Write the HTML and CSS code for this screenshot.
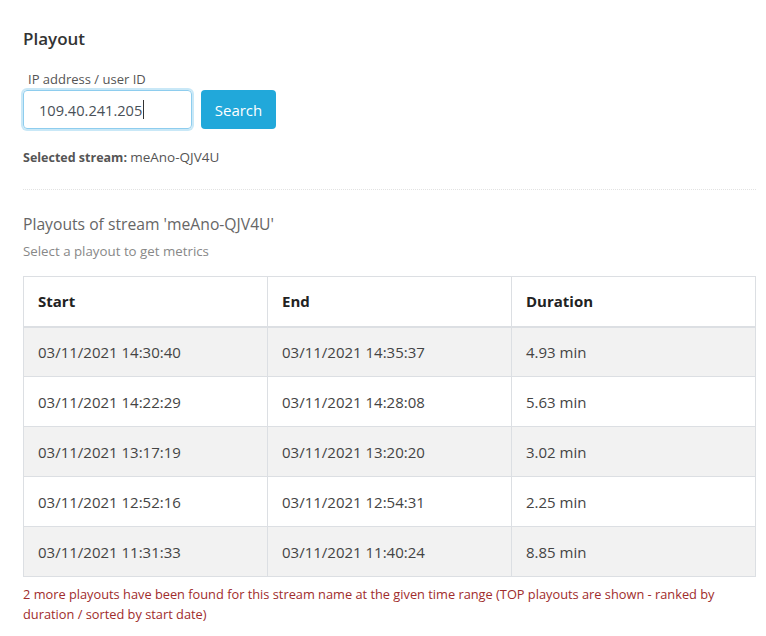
FILE: index.html
```html
<!DOCTYPE html>
<html>
<head>
<meta charset="utf-8">
<link rel="stylesheet" href="styles.css">
</head>
<body>
<div class="page">
  <h1 class="title">Playout</h1>
  <label class="field-label" for="ip">IP address / user ID</label>
  <div class="search-row">
    <div class="input"><span class="input-text">109.40.241.205</span><span class="caret"></span></div>
    <button class="btn">Search</button>
  </div>
  <p class="selected"><b>Selected stream:</b> <span class="selected-value">meAno-QJV4U</span></p>
  <hr class="rule">
  <h2 class="subtitle">Playouts of stream 'meAno-QJV4U'</h2>
  <p class="hint">Select a playout to get metrics</p>
  <table class="grid">
    <thead>
      <tr><th>Start</th><th>End</th><th>Duration</th></tr>
    </thead>
    <tbody>
      <tr><td>03/11/2021 14:30:40</td><td>03/11/2021 14:35:37</td><td>4.93 min</td></tr>
      <tr><td>03/11/2021 14:22:29</td><td>03/11/2021 14:28:08</td><td>5.63 min</td></tr>
      <tr><td>03/11/2021 13:17:19</td><td>03/11/2021 13:20:20</td><td>3.02 min</td></tr>
      <tr><td>03/11/2021 12:52:16</td><td>03/11/2021 12:54:31</td><td>2.25 min</td></tr>
      <tr><td>03/11/2021 11:31:33</td><td>03/11/2021 11:40:24</td><td>8.85 min</td></tr>
    </tbody>
  </table>
  <p class="note">2 more playouts have been found for this stream name at the given time range (TOP playouts are shown - ranked by duration / sorted by start date)</p>
</div>
</body>
</html>
```

FILE: styles.css
```css
* { box-sizing: border-box; }
body {
  margin: 0;
  background: #fff;
  font-family: "Open Sans", "Noto Sans", sans-serif;
  color: #333;
}
.page {
  width: 766px;
  padding: 29px 10px 0 23px;
}
.title {
  margin: 0;
  font-size: 17px;
  line-height: 20px;
  font-weight: 600;
  color: #333;
}
.field-label {
  display: block;
  margin: 21px 0 0 5px;
  font-size: 13px;
  line-height: 18px;
  color: #555;
}
.search-row {
  display: flex;
  gap: 9px;
  margin-top: 2px;
}
.input {
  width: 169px;
  height: 39px;
  border: 1px solid #8ecdee;
  border-radius: 4px;
  box-shadow: 0 0 0 2px #c9e8f7;
  display: flex;
  align-items: center;
  padding-left: 15px;
  font-size: 14.6px;
  color: #495057;
}
.caret {
  display: inline-block;
  width: 1px;
  height: 19px;
  background: #333;
  margin-left: 1px;
}
.btn {
  width: 75px;
  height: 39px;
  border: none;
  border-radius: 4px;
  background: #21a8da;
  color: #fff;
  font-family: inherit;
  font-size: 15px;
  padding: 0;
}
.selected {
  margin: 20px 0 0;
  height: 18px;
  font-size: 12.5px;
  line-height: 18px;
  color: #555;
}
.selected b { font-weight: 700; }
.selected-value { font-size: 13.5px; line-height: 1; }
.rule {
  margin: 22px 0 0;
  border: 0;
  border-top: 1px dotted #e2e2e2;
  height: 0;
}
.subtitle {
  margin: 23px 0 0;
  font-size: 15.7px;
  line-height: 22px;
  font-weight: 400;
  color: #666;
}
.hint {
  margin: 7px 0 0;
  font-size: 13.3px;
  line-height: 18px;
  color: #888;
}
.grid {
  margin-top: 16px;
  width: 733px;
  border-collapse: collapse;
  table-layout: fixed;
  font-size: 15px;
}
.grid th, .grid td {
  border: 1px solid #dcdfe3;
  height: 50px;
  padding: 0 14px;
  text-align: left;
  vertical-align: middle;
}
.grid th {
  font-weight: 700;
  color: #222;
  border-bottom: 2px solid #dcdfe3;
}
.grid td { color: #444; }
.grid tbody tr:nth-child(odd) td { background: #f2f2f2; }
.note {
  margin: 7px 0 0;
  font-size: 12.8px;
  line-height: 20px;
  color: #a02c2c;
}
```
